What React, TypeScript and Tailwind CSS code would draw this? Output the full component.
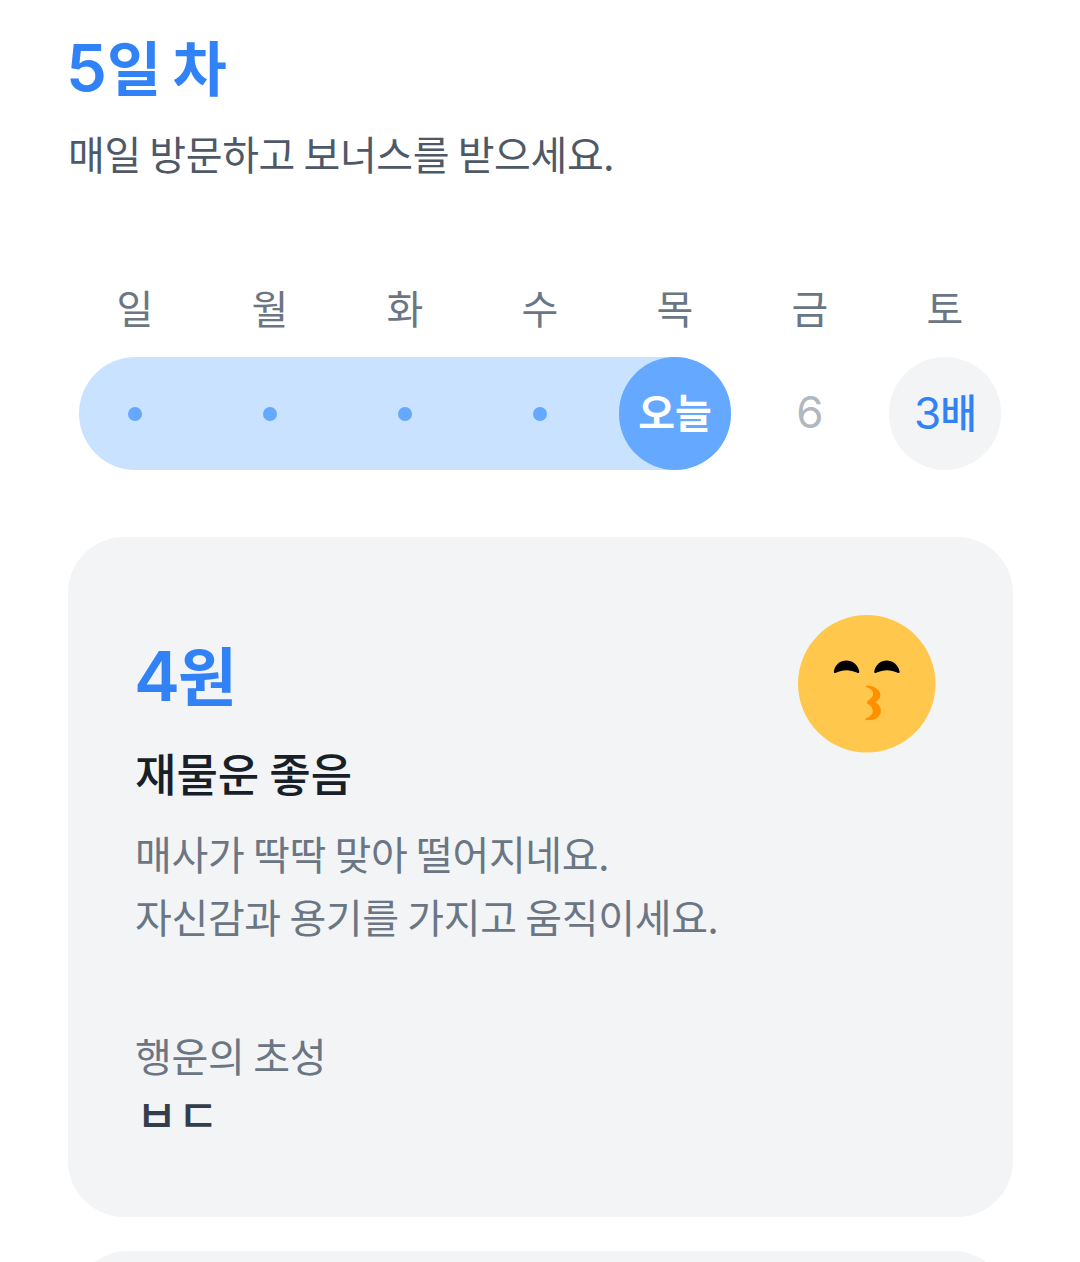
const days = [
  { name: '일', state: 'done' },
  { name: '월', state: 'done' },
  { name: '화', state: 'done' },
  { name: '수', state: 'done' },
  { name: '목', state: 'today' },
  { name: '금', state: 'next' },
  { name: '토', state: 'bonus' },
];

function DayCell({ state }: { state: string }) {
  if (state === 'done') {
    return <span className="size-3.5 rounded-full bg-[#64a8ff]" />;
  }
  if (state === 'today') {
    return (
      <span className="flex h-[113px] w-[112px] items-center justify-center rounded-full bg-[#64a8ff] pb-1.5 text-[40px] font-bold text-white">
        오늘
      </span>
    );
  }
  if (state === 'bonus') {
    return (
      <span className="flex h-[113px] w-[112px] items-center justify-center rounded-full bg-[#f2f4f6] pb-[5px] text-[40px] font-medium tracking-[-1px] text-[#3182f6]">
        <span className="pt-[3px] font-[Inter] text-[44px] font-normal">3</span>배
      </span>
    );
  }
  return <span className="pb-[3px] font-[Inter] text-[44px] text-[#b0b8c1]">6</span>;
}

function KissFace() {
  return (
    <svg viewBox="0 0 138 138" className="size-[137.5px]">
      <circle cx="69" cy="69" r="69" fill="#ffc84d" />
      <path d="M36 57C38 42 59 42 61.500 57Q61.500 59 59.500 58C52 54.500 45 54.500 38 58Q36 59 36 57Z" fill="#000" />
      <path d="M76.500 57C79 42 99 42 102 57Q102 59 100 58C93 54.500 86 54.500 78.500 58Q76.500 59 76.500 57Z" fill="#000" />
      <path d="M69 70.800C81 71 88 81 78 87.500C88 94 83 107 69 105.300C67 105 67.500 103.500 69.500 103C77 100 77 93 69.500 88.700Q68.500 87.500 69.700 86.300C77 82 78 76 69.500 72.800C68 72.300 67.800 70.800 69 70.800Z" fill="#ff9100" />
    </svg>
  );
}

function App() {
  return (
    <main className="h-[1262px] overflow-hidden bg-white px-[68px] pt-[29px] font-['Noto_Sans_CJK_KR',sans-serif]">
      <h1 className="-ml-0.5 h-[77px] text-[59px] leading-[74px] font-bold text-[#3182f6]">
        <span className="font-[Inter] text-[65px] font-semibold">5</span>일<span className="-ml-0.5"> 차</span>
      </h1>
      <p className="mt-[15px] h-[65px] text-[40px] leading-[64px] tracking-[-0.4px] text-[#4e5968]">매일 방문하고 보너스를 받으세요.</p>

      <section className="mt-[91px] -ml-[0.5px] w-[945px]">
        <div className="grid grid-cols-7">
          {days.map((day) => (
            <p key={day.name} className="h-20 text-center text-[40px] leading-[60px] text-[#6b7684]">{day.name}</p>
          ))}
        </div>
        <div className="grid grid-cols-7">
          <div className="col-span-5 col-start-1 row-start-1 mx-[11.5px] h-[113px] rounded-full bg-[#c9e2ff]" />
          {days.map((day, i) => (
            <div key={day.name} className="row-start-1 flex h-[113px] items-center justify-center" style={{ gridColumnStart: i + 1 }}>
              <DayCell state={day.state} />
            </div>
          ))}
        </div>
      </section>

      <article className="mt-[67px] flex h-[680px] w-[945px] justify-between rounded-[56px] bg-[#f2f4f6] pr-[77.5px] pl-[67px]">
        <div className="pt-[99px]">
          <h2 className="-ml-px h-[74px] text-[64px] leading-[74px] font-bold text-[#3182f6]">
            <span className="font-[Inter] text-[69px] font-semibold tracking-[-2px]">4</span>원
          </h2>
          <h3 className="mt-[31px] h-16 text-[45px] leading-[64px] font-medium text-[#191f28]">재물운 좋음</h3>
          <p className="mt-[17px] text-[40px] leading-[63px] tracking-[-0.35px] text-[#6b7684]">
            매사가 딱딱 맞아 떨어지네요.<br />
            자신감과 용기를 가지고 움직이세요.
          </p>
          <p className="mt-[76px] text-[40px] leading-[63px] tracking-[-0.3px] text-[#6b7684]">행운의 초성</p>
          <p className="pl-px text-[45px] leading-[54px] font-medium text-[#333d4b]">ㅂㄷ</p>
        </div>
        <div className="pt-[78px]">
          <KissFace />
        </div>
      </article>

      <div className="mx-1 mt-[34px] h-40 w-[937px] rounded-[56px] bg-[#f2f4f6]" />
    </main>
  );
}

export default App;
